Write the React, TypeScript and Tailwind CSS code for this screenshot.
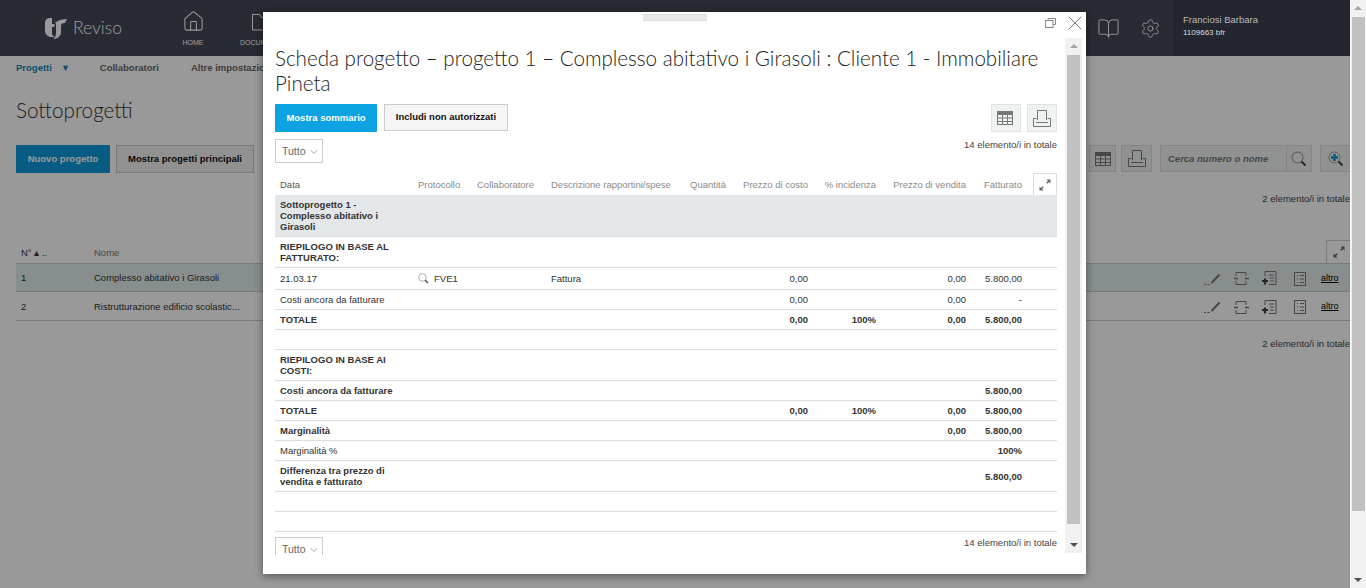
import { BookOpen, ChevronDown, Home, Settings, X } from "lucide-react";

const arial = "font-['Liberation_Sans',Arial,sans-serif]";

function GridIcon({ className }: { className?: string }) {
  return (
    <svg className={className} width="16" height="14" viewBox="0 0 16 14" fill="none" stroke="#777">
      <rect x="0.5" y="0.5" width="15" height="13" />
      <rect x="0.5" y="0.5" width="15" height="3" fill="#777" />
      <path d="M5.5 3v10.5M10.5 3v10.5M0.5 7h15M0.5 10.5h15" />
    </svg>
  );
}

function PrintIcon() {
  return (
    <svg width="18" height="17" viewBox="0 0 18 17" fill="none" stroke="#777">
      <path d="M4.5 10V0.5h9V10" />
      <path d="M3.5 8.5h-3v8h17v-8h-3" />
      <path d="M3 12.5h12" />
    </svg>
  );
}

function ExpandIcon() {
  return (
    <svg width="12" height="12" viewBox="0 0 12 12" fill="#666">
      <path d="M7.5 0.5h4v4l-1.5-1.5-1.8 1.8-1-1 1.8-1.8z" />
      <path d="M0.5 11.5V7.5l1.5 1.5 1.8-1.8 1 1-1.8 1.8 1.5 1.5z" />
    </svg>
  );
}

function Magnifier({ size = 16, plus = false }: { size?: number; plus?: boolean }) {
  return (
    <svg width={size} height={size} viewBox="0 0 16 16" fill="none">
      <circle cx="6.5" cy="6.5" r="5.5" stroke={plus ? "#999" : "#888"} />
      {plus && <path d="M6.5 3v7M3 6.5h7" stroke="#0d9adb" strokeWidth="2.6" />}
      <path d="M10.5 10.5l4 4" stroke="#444" strokeWidth="2" />
    </svg>
  );
}

function RowIcons() {
  return (
    <div className="flex items-center text-[#777]">
      <svg className="mr-[12px]" width="17" height="14" viewBox="0 0 17 14" fill="none" stroke="currentColor">
        <path d="M0 12.5h2M3.5 12.5h2" />
        <path d="M7.5 11l8-8.5" strokeWidth="2" />
      </svg>
      <svg className="mr-[12px]" width="17" height="13" viewBox="0 0 17 13" fill="none" stroke="currentColor">
        <path d="M3 4V.5h10V4M3 9v3.5h10V9" />
        <path d="M1 6.5h4M12 6.5h4" strokeWidth="1.5" />
      </svg>
      <svg className="mr-[17px]" width="15" height="15" viewBox="0 0 15 15" fill="none" stroke="currentColor">
        <path d="M3 5V.5h11v13H7M7 4h5M8 7h4M8 10h4" />
        <path d="M0 10h6M3 7.5v6" stroke="#444" strokeWidth="2.2" />
      </svg>
      <svg className="mr-[15px]" width="12" height="14" viewBox="0 0 12 14" fill="none" stroke="currentColor">
        <rect x="0.5" y="0.5" width="11" height="13" />
        <path d="M3 3.5h1M6 3.5h4M3 7h1M6 7h4M3 10.5h1M6 10.5h4" />
      </svg>
      <span className="w-[17px] text-[9px] font-normal text-black underline">altro</span>
    </div>
  );
}

function Background() {
  return (
    <div className="absolute inset-y-0 left-0 w-[1350px] overflow-hidden bg-white">
      <header className="flex h-[56px] bg-[#434858]">
        <div className="flex w-[1173px] items-center">
          <div className="ml-[44px] flex w-[119px] items-center">
            <svg width="23" height="23" viewBox="0 0 23 23" fill="white">
              <path d="M1 6c0-3 2-5 5-5h2v6h2.5v3H8v6c0 2 1 3 3 4H6c-3-1-5-3-5-6z" />
              <path d="M12 5c3-2 7-3 11-3l-2 4c-3 0-4 1-4 3v6c0 4-3 7-8 7 2-2 3-3 3-6V9c0-2 0-3-1-4z" />
            </svg>
            <span className="ml-[6px] font-['Lato',sans-serif] text-[17.5px] font-light text-white">Reviso</span>
          </div>
          <div className="mt-[2px] flex w-[60px] flex-col items-center text-white">
            <Home size={23} strokeWidth={1.1} />
            <span className={`${arial} mt-[5px] text-[7px]`}>HOME</span>
          </div>
          <div className="ml-[17px] mt-[2px] flex flex-col items-center text-white">
            <svg className="mt-[3px]" width="19" height="18" viewBox="0 0 19 18" fill="none" stroke="currentColor">
              <path d="M.5 17V1.5h7l2 3h9V17z" />
            </svg>
            <span className={`${arial} mt-[7px] text-[7px]`}>DOCUMENTI</span>
          </div>
          <div className="ml-auto mr-[12px] flex items-center gap-[20px] text-white">
            <BookOpen size={23} strokeWidth={1} />
            <Settings size={21} strokeWidth={1} />
          </div>
        </div>
        <div className={`${arial} relative z-10 flex-1 bg-[#24262f] pl-[10px] pt-[14px]`}>
          <p className="text-[9.5px] leading-[12px] text-[#bbbbbb]">Franciosi Barbara</p>
          <p className="mt-[1px] text-[8px] leading-[12px] text-[#dddddd]">1109663 bfr</p>
        </div>
      </header>

      <div className={`${arial} pl-[16px]`}>
        <nav className="flex h-[25px] items-center text-[9.5px] font-bold text-[#666]">
          <span className="text-[#1385b5]">Progetti</span>
          <span className="ml-[9px] text-[9px] text-[#1385b5]">▼</span>
          <span className="ml-[30px]">Collaboratori</span>
          <span className="ml-[32px]">Altre impostazioni</span>
        </nav>
        <h1 className="mt-[16px] font-['Lato',sans-serif] text-[20.7px] font-light leading-[26px] text-[#333]">Sottoprogetti</h1>
        <div className="mt-[22px] flex h-[28px] w-[1400px] items-stretch text-[9.5px] font-bold">
          <button className="w-[94px] rounded-[1px] bg-[#0d9adb] text-white">Nuovo progetto</button>
          <button className="ml-[6px] w-[138px] border border-[#ccc] bg-[#f2f2f2] text-[#111]">Mostra progetti principali</button>
          <div className="ml-[835px] flex h-[27px] w-[27px] items-center justify-center border border-[#ddd] bg-[#f0f3f4]">
            <GridIcon />
          </div>
          <div className="ml-[5px] flex h-[27px] w-[31px] items-center justify-center border border-[#ddd] bg-[#f0f3f4]">
            <PrintIcon />
          </div>
          <div className="ml-[8px] flex h-[27px] w-[152px] border border-[#ddd] bg-[#f0f3f4]">
            <span className="flex-1 pl-[7px] text-[9.5px] italic leading-[25px] text-[#777]">Cerca numero o nome</span>
            <div className="flex w-[25px] items-center justify-center border-l border-[#ddd]">
              <Magnifier />
            </div>
          </div>
          <div className="ml-[8px] flex h-[27px] w-[40px] items-center border border-[#ddd] bg-[#f0f3f4] pl-[7px]">
            <Magnifier plus />
          </div>
        </div>
        <p className="mt-[20px] text-right text-[9.5px] leading-[12px] text-[#444]">2 elemento/i in totale</p>
        <div className="mt-[35px] flex h-[23px] items-center justify-between text-[9.5px] text-[#777]">
          <div className="flex items-center pt-[3px]">
            <span className="ml-[5px] w-[73px] text-[#333]">N° ▴ ..</span>
            <span>Nome</span>
          </div>
          <div className="flex h-[23px] w-[24px] items-center justify-center border-l border-t border-[#ccc]">
            <ExpandIcon />
          </div>
        </div>
        <div className="flex h-[29px] items-center justify-between border-y border-[#ccc] bg-[#e3eded] pr-[12px] pt-[2px] text-[9.5px] text-[#333]">
          <div className="flex">
            <span className="ml-[5px] w-[73px]">1</span>
            <span>Complesso abitativo i Girasoli</span>
          </div>
          <RowIcons />
        </div>
        <div className="flex h-[29px] items-center justify-between border-b border-[#ccc] pr-[12px] pt-[2px] text-[9.5px] text-[#333]">
          <div className="flex">
            <span className="ml-[5px] w-[73px]">2</span>
            <span>Ristrutturazione edificio scolastic...</span>
          </div>
          <RowIcons />
        </div>
        <p className="mt-[17px] text-right text-[9.5px] leading-[12px] text-[#444]">2 elemento/i in totale</p>
      </div>
      <div className="absolute inset-0 bg-black/40" />
    </div>
  );
}

type Row = {
  label: string;
  height: string;
  boldLabel?: boolean;
  group?: boolean;
  date?: boolean;
  costo?: string;
  incidenza?: string;
  vendita?: string;
  fatturato?: string;
  boldValues?: boolean;
};

const rows: Row[] = [
  { label: "Sottoprogetto 1 - Complesso abitativo i Girasoli", height: "h-[42px]", boldLabel: true, group: true },
  { label: "RIEPILOGO IN BASE AL FATTURATO:", height: "h-[31px]", boldLabel: true },
  { label: "21.03.17", height: "h-[22px]", date: true, costo: "0,00", vendita: "0,00", fatturato: "5.800,00" },
  { label: "Costi ancora da fatturare", height: "h-[20px]", costo: "0,00", vendita: "0,00", fatturato: "-" },
  { label: "TOTALE", height: "h-[20px]", boldLabel: true, boldValues: true, costo: "0,00", incidenza: "100%", vendita: "0,00", fatturato: "5.800,00" },
  { label: "", height: "h-[20px]" },
  { label: "RIEPILOGO IN BASE AI COSTI:", height: "h-[31px]", boldLabel: true },
  { label: "Costi ancora da fatturare", height: "h-[20px]", boldLabel: true, boldValues: true, fatturato: "5.800,00" },
  { label: "TOTALE", height: "h-[20px]", boldLabel: true, boldValues: true, costo: "0,00", incidenza: "100%", vendita: "0,00", fatturato: "5.800,00" },
  { label: "Marginalità", height: "h-[20px]", boldLabel: true, boldValues: true, vendita: "0,00", fatturato: "5.800,00" },
  { label: "Marginalità %", height: "h-[20px]", boldValues: true, fatturato: "100%" },
  { label: "Differenza tra prezzo di vendita e fatturato", height: "h-[31px]", boldLabel: true, boldValues: true, fatturato: "5.800,00" },
  { label: "", height: "h-[20px]" },
  { label: "", height: "h-[20px]" },
];

function ProjectTable() {
  return (
    <table className="w-[782px] table-fixed border-separate border-spacing-0 text-[9.5px] leading-[11px] text-[#333]">
      <colgroup>
        <col className="w-[137px]" />
        <col className="w-[59px]" />
        <col className="w-[74px]" />
        <col className="w-[138px]" />
        <col className="w-[49px]" />
        <col className="w-[82px]" />
        <col className="w-[68px]" />
        <col className="w-[90px]" />
        <col className="w-[56px]" />
        <col className="w-[29px]" />
      </colgroup>
      <thead className="font-normal text-[#8a8a8a]">
        <tr className="h-[22px]">
          <th className="pl-[5px] text-left font-normal text-[#555]">Data</th>
          <th className="pl-[6px] text-left font-normal">Protocollo</th>
          <th className="pl-[6px] text-left font-normal">Collaboratore</th>
          <th className="pl-[6px] text-left font-normal">Descrizione rapportini/spese</th>
          <th className="pr-[6px] text-right font-normal">Quantità</th>
          <th className="pr-[6px] text-right font-normal">Prezzo di costo</th>
          <th className="pr-[6px] text-right font-normal">% incidenza</th>
          <th className="pr-[6px] text-right font-normal">Prezzo di vendita</th>
          <th className="pr-[6px] text-right font-normal">Fatturato</th>
          <th className="p-0">
            <div className="ml-[5px] flex h-[22px] w-[24px] items-center justify-center border border-b-0 border-[#ddd]">
              <ExpandIcon />
            </div>
          </th>
        </tr>
      </thead>
      <tbody>
        {rows.map((row, i) => (
          <tr key={i} className={row.group ? "bg-[#e3e7ea]" : ""}>
            <td className={`${row.height} border-b border-[#ddd] pl-[5px] pr-[14px] ${row.boldLabel ? "font-bold" : ""}`}>{row.label}</td>
            <td className="border-b border-[#ddd] pl-[6px]">
              {row.date && (
                <span className="flex items-center gap-[5px]">
                  <Magnifier size={11} />
                  FVE1
                </span>
              )}
            </td>
            <td className="border-b border-[#ddd]" />
            <td className="border-b border-[#ddd] pl-[6px]">{row.date && "Fattura"}</td>
            <td className="border-b border-[#ddd]" />
            <td className={`border-b border-[#ddd] pr-[6px] text-right ${row.boldValues ? "font-bold" : ""}`}>{row.costo}</td>
            <td className={`border-b border-[#ddd] pr-[6px] text-right ${row.boldValues ? "font-bold" : ""}`}>{row.incidenza}</td>
            <td className={`border-b border-[#ddd] pr-[6px] text-right ${row.boldValues ? "font-bold" : ""}`}>{row.vendita}</td>
            <td className={`border-b border-[#ddd] pr-[6px] text-right ${row.boldValues ? "font-bold" : ""}`}>{row.fatturato}</td>
            <td className="border-b border-[#ddd]" />
          </tr>
        ))}
      </tbody>
    </table>
  );
}

function TuttoSelect() {
  return (
    <div className="flex h-[24px] w-[48px] shrink-0 items-center border border-[#ccc] pl-[6px] pt-[1px] text-[10.5px] text-[#666]">
      Tutto
      <ChevronDown size={12} strokeWidth={1.5} className="ml-[2px] text-[#888]" />
    </div>
  );
}

function ScrollBar({ className, thumb }: { className: string; thumb: string }) {
  return (
    <div className={`flex flex-col items-center bg-[#f1f1f1] ${className}`}>
      <div className="mt-[6px] h-0 w-0 border-x-[4px] border-b-[4px] border-x-transparent border-b-[#a3a3a3]" />
      <div className={`mt-[7px] w-[13px] bg-[#c1c1c1] ${thumb}`} />
      <div className="mb-[6px] mt-auto h-0 w-0 border-x-[4px] border-t-[4px] border-x-transparent border-t-[#505050]" />
    </div>
  );
}

function Modal() {
  return (
    <div className={`${arial} absolute left-[263px] top-[12px] h-[562px] w-[823px] bg-white shadow-[0_2px_8px_rgba(0,0,0,0.45)]`}>
      <div className="relative h-[26px]">
        <div className="absolute left-[380px] top-[2px] h-[7px] w-[64px] border-y border-[#ddd] bg-[#e8e8e8]" />
        <svg className="absolute left-[782px] top-[6px]" width="11" height="10" viewBox="0 0 11 10" fill="none" stroke="#888">
          <path d="M3 2.5V.5h7.5v6H8" />
          <rect x="0.5" y="2.5" width="7.5" height="7" />
        </svg>
        <X className="absolute left-[800px] top-[-1px] text-[#777]" size={24} strokeWidth={1} />
      </div>
      <div className="flex">
        <div className="h-[517px] w-[802px] overflow-hidden pl-[12px]">
          <h2 className="mt-[8px] w-[782px] font-['Lato',sans-serif] text-[20.6px] font-light leading-[25px] text-[#222]">
            Scheda progetto – progetto 1 – Complesso abitativo i Girasoli : Cliente 1 - Immobiliare Pineta
          </h2>
          <div className="mt-[8px] flex h-[28px] w-[782px] items-start text-[9.5px] font-bold">
            <button className="h-[28px] w-[102px] rounded-[1px] bg-[#0da2e2] text-white">Mostra sommario</button>
            <button className="ml-[7px] h-[27px] w-[124px] border border-[#ccc] bg-[#f5f5f5] text-[#111]">Includi non autorizzati</button>
            <div className="ml-auto flex h-[28px] w-[30px] items-center justify-center border border-[#e2e2e2] bg-[#eff2f3] pr-[2px]">
              <GridIcon />
            </div>
            <div className="ml-[6px] flex h-[28px] w-[30px] items-center justify-center border border-[#e2e2e2] bg-[#eff2f3]">
              <PrintIcon />
            </div>
          </div>
          <div className="mt-[7px] flex w-[782px] items-start justify-between">
            <TuttoSelect />
            <span className="text-[9.5px] leading-[12px] text-[#444]">14 elemento/i in totale</span>
          </div>
          <div className="mt-[10px]">
            <ProjectTable />
          </div>
          <div className="mt-[5px] flex w-[782px] items-start justify-between">
            <TuttoSelect />
            <span className="text-[9.5px] leading-[12px] text-[#444]">14 elemento/i in totale</span>
          </div>
        </div>
        <ScrollBar className="h-[515px] w-[17px]" thumb="h-[469px]" />
      </div>
    </div>
  );
}

export default function App() {
  return (
    <div className="relative h-[588px] w-[1366px] overflow-hidden bg-white">
      <Background />
      <ScrollBar className="absolute right-0 top-0 h-[588px] w-[16px]" thumb="h-[494px]" />
      <Modal />
    </div>
  );
}
